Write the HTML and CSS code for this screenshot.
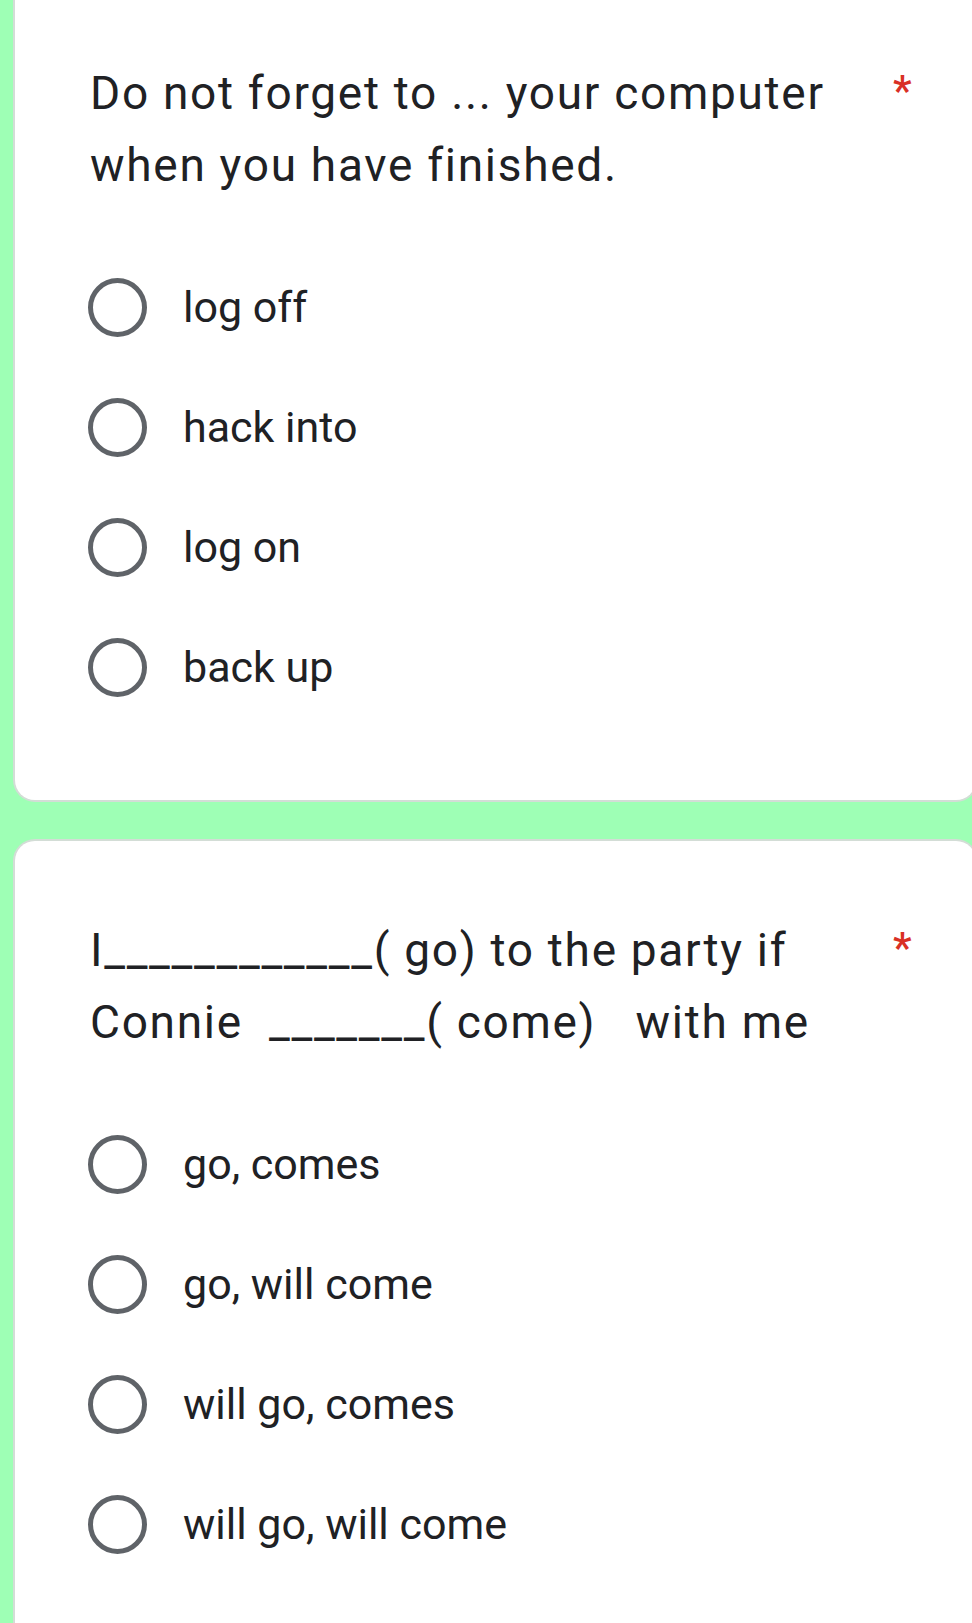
FILE: index.html
```html
<!DOCTYPE html>
<html lang="en">
<head>
<meta charset="utf-8">
<title>Form</title>
<link rel="stylesheet" href="styles.css">
</head>
<body>
<main class="page">
  <section class="card card--first">
    <div class="question">
      <div class="question-text">Do not forget to ... your computer when you have finished.</div>
      <span class="required">*</span>
    </div>
    <ul class="options">
      <li class="option"><span class="radio"></span><span class="label">log off</span></li>
      <li class="option"><span class="radio"></span><span class="label">hack into</span></li>
      <li class="option"><span class="radio"></span><span class="label">log on</span></li>
      <li class="option"><span class="radio"></span><span class="label">back up</span></li>
    </ul>
  </section>
  <section class="card">
    <div class="question">
      <div class="question-text">I____________( go) to the party if Connie &nbsp;_______( come) &nbsp; with me</div>
      <span class="required">*</span>
    </div>
    <ul class="options">
      <li class="option"><span class="radio"></span><span class="label">go, comes</span></li>
      <li class="option"><span class="radio"></span><span class="label">go, will come</span></li>
      <li class="option"><span class="radio"></span><span class="label">will go, comes</span></li>
      <li class="option"><span class="radio"></span><span class="label">will go, will come</span></li>
    </ul>
  </section>
</main>
</body>
</html>
```
FILE: styles.css
```css
html, body {
  margin: 0;
  padding: 0;
  overflow-x: hidden;
}
body {
  background: #9effb5;
  color: #202124;
  font-family: Roboto, "Liberation Sans", sans-serif;
}
.page {
  display: flex;
  flex-direction: column;
  gap: 41px;
  padding-left: 15px;
  margin-right: -4px;
}
.card {
  background: #fff;
  border-radius: 20px;
  box-shadow: 0 0 0 2px #d3ddd6;
  padding: 73px 67px 73px 73px;
}
.card--first {
  border-radius: 0 0 20px 20px;
  padding-top: 57px;
}
.question {
  display: flex;
  align-items: flex-start;
}
.question-text {
  flex: 1;
  font-family: Roboto, "Liberation Sans", sans-serif;
  font-size: 46px;
  line-height: 72px;
  letter-spacing: 1.7px;
  padding-left: 2px;
  font-variant-ligatures: none;
}
.required {
  color: #d93025;
  font-size: 42px;
  font-weight: 500;
  line-height: 40px;
  margin-top: 14px;
  width: 16px;
  margin-left: 28px;
}
.options {
  list-style: none;
  margin: 46px 0 0;
  padding: 0;
  display: flex;
  flex-direction: column;
}
.option {
  display: flex;
  align-items: center;
  height: 120px;
}
.radio {
  box-sizing: border-box;
  width: 59px;
  height: 59px;
  border: 5px solid #5f6368;
  border-radius: 50%;
  flex: none;
}
.label {
  margin-left: 36px;
  font-size: 43px;
}
```
